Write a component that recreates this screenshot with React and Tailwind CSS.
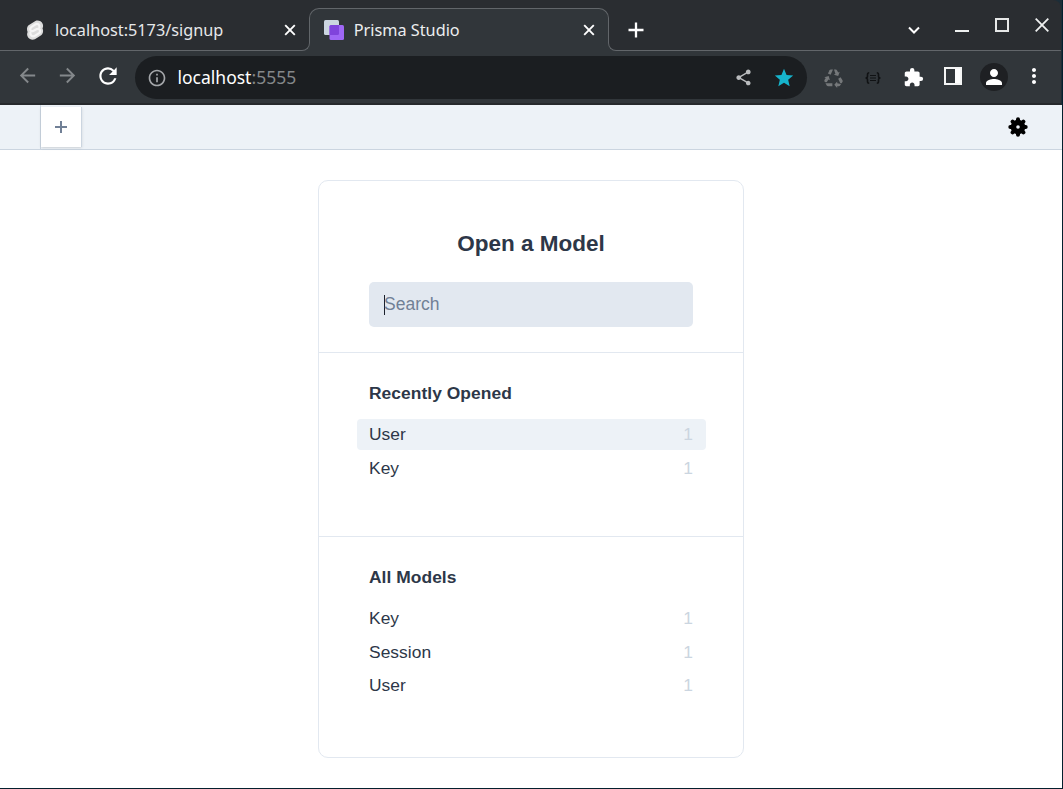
import React from "react";
import { MdArrowBack, MdArrowForward, MdRefresh, MdShare, MdStar, MdExtension, MdPerson, MdMoreVert, MdInfoOutline } from "react-icons/md";

function Close({ className }) {
  return (
    <svg className={className} viewBox="0 0 12 12" width="12" height="12" fill="none" stroke="#fff" strokeWidth="1.900">
      <path d="M1.200 1.200l9.600 9.600M10.800 1.200L1.200 10.800" />
    </svg>
  );
}

function SvelteLogo() {
  return (
    <svg width="18" height="20" viewBox="0 0 18 20" fill="none" strokeLinecap="round">
      <path d="M2.600 5.200 9.400 1C12 -.1 15.400 1 16.600 3.800c.7 1.600.6 3-.1 4.500.8 1.900.9 3.800-.2 5.600-.5.8-1.100 1.400-1.900 1.900l-5.500 3.400C6.200 20.400 2.600 19.200 1.500 16.300c-.6-1.500-.5-3 .1-4.400C.6 9.500.8 6.900 2.600 5.200Z" fill="#dcdcdc" />
      <path d="M13.400 7.200c.6-2.800-2-4-4.200-2.700L5.600 6.800C3 8.600 4.400 12 7.200 11l3.600-1.900c2.800-1 4.500 2 2.300 4l-4.200 2.700c-2.400 1.200-5-.2-4.500-2.900" stroke="#f5f5f5" strokeWidth="2.200" />
    </svg>
  );
}

function PrismaLogo() {
  return (
    <svg width="20" height="20" viewBox="0 0 20 20">
      <rect width="15" height="15" rx="1.500" fill="#cbd5e0" />
      <rect x="5.500" y="5" width="14.500" height="15" rx="1.500" fill="#9f67f5" />
      <path d="M5.500 6.500Q5.500 5 7 5h8v8.500q0 1.500-1.500 1.500h-8z" fill="#8043dc" />
    </svg>
  );
}

function Recycle() {
  return (
    <svg className="mt-[18px] ml-[17px] shrink-0" width="19" height="19" viewBox="0 0 19 19" fill="#75787a">
      <path d="M6.800 .6h2.200L6.600 5.800 3.900 4.500 5.600 1.300Q6 .6 6.800 .6Z" />
      <path d="M10 .6h1.800q.8 0 1.300.8l1.100 2 1.500-.7-1.500 4.300-4.300-1.300 1.500-.9Z" />
      <path d="M14.200 9.700l2.400-1.500 1.900 3q.5 1-.1 1.900l-.7 1.100h-1.400Z" />
      <path d="M17 15l-.7 1.300q-.5.900-1.500.9h-1.600V19l-2.900-3.300 2.900-3.300V14.200Z" />
      <path d="M8.400 14.300v2.900H4.200q-1 0-1.500-.8L1.500 14.300Z" />
      <path d="M.3 8.200l4.400-1.200 1.200 4.200-1.500-.8L2.900 13Q1.200 13.700.5 12.600q-.4-.9.1-1.800l1.200-1.900Z" />
    </svg>
  );
}

function TabStrip() {
  return (
    <div className="flex h-[51px] rounded-tr-[8px] bg-[#2a2d31]">
      <div className="flex w-[301px] items-start border-b border-[#62666a] pt-5 pl-[26px]">
        <SvelteLogo />
        <span className="ml-[11px] w-[229px] text-[16.250px] leading-5 text-[#e6e8ea]">localhost:5173/signup</span>
        <Close className="mt-1" />
      </div>
      <div className="h-[9px] w-[9px] self-end bg-[#31363a]">
        <div className="h-[9px] w-[9px] rounded-br-[8px] border-r border-b border-[#62666a] bg-[#2a2d31]" />
      </div>
      <div className="-ml-px flex w-[300px] flex-col pt-2">
        <div className="flex h-[34px] items-start rounded-t-[10px] border border-b-0 border-[#62666a] bg-[#31363a] pt-[11px] pl-[14px]">
          <PrismaLogo />
          <span className="ml-[9.750px] w-[228.750px] text-[16.250px] leading-5 text-[#eceeef]">Prisma Studio</span>
          <Close className="mt-1" />
        </div>
        <div className="mx-px h-[9px] bg-[#31363a]" />
      </div>
      <div className="-ml-px h-[9px] w-[9px] self-end bg-[#31363a]">
        <div className="h-[9px] w-[9px] rounded-bl-[8px] border-b border-l border-[#62666a] bg-[#2a2d31]" />
      </div>
      <div className="flex grow items-start border-b border-[#62666a]">
        <svg className="mt-[22px] ml-[11px]" width="16" height="16" viewBox="0 0 16 16" stroke="#fff" strokeWidth="2.300">
          <path d="M8 .5v15M.5 8h15" />
        </svg>
        <svg className="mt-[26px] ml-[263px]" width="14" height="9" viewBox="0 0 14 9" fill="none" stroke="#fff" strokeWidth="2">
          <path d="M2 1.500l5 5 5-5" />
        </svg>
        <div className="mt-[30px] ml-[34px] h-[2px] w-[14px] bg-[#eef0f0]" />
        <div className="mt-[18px] ml-[26px] h-[14px] w-[14px] border-2 border-[#e6e8e8]" />
        <svg className="mt-[18px] ml-[26px]" width="14" height="14" viewBox="0 0 14 14" stroke="#eef0f0" strokeWidth="1.800">
          <path d="M.7.7l12.600 12.600M13.300.7L.7 13.300" />
        </svg>
      </div>
    </div>
  );
}

function Toolbar() {
  return (
    <div className="flex h-[54px] items-start border-b-2 border-[#26292c] bg-[#31363a]">
      <MdArrowBack className="mt-[13px] ml-[16px] size-[23px] shrink-0 text-[#84888b]" />
      <MdArrowForward className="mt-[13px] ml-[17px] size-[23px] shrink-0 text-[#84888b]" />
      <MdRefresh className="mt-[12px] ml-[16px] size-[26px] shrink-0 text-white" />
      <div className="mt-[5px] ml-[14px] flex h-[43px] w-[672px] shrink-0 items-center rounded-full bg-[#1b1e21] pl-[12px]">
        <MdInfoOutline className="size-5 text-[#a4a7aa]" />
        <span className="-mt-[2px] ml-[10.500px] w-[556.500px] text-[17.500px] leading-6 text-white">
          localhost<span className="text-[#85888a]">:5555</span>
        </span>
        <MdShare className="size-[19px] text-[#b9bbbd]" />
        <MdStar className="ml-[20px] size-[22px] text-[#16b4cc]" />
      </div>
      <Recycle />
      <svg className="mt-[20px] ml-[22px] shrink-0" width="16" height="14" viewBox="0 0 16 14" fill="none" stroke="#101214">
        <path d="M4.200 1.800Q2.500 1.800 2.500 3.500v1.800Q2.500 7 .5 7q2 0 2 1.700v1.800Q2.500 12.200 4.200 12.200M11.800 1.800q1.700 0 1.700 1.700v1.800Q13.500 7 15.500 7q-2 0-2 1.700v1.800Q13.500 12.200 11.800 12.200" strokeWidth="1.600" />
        <path d="M5 4.500h6M5 7h6M5 9.500h6" strokeWidth="1" />
      </svg>
      <MdExtension className="mt-[16px] ml-[22px] size-[21px] shrink-0 text-white" />
      <div className="mt-[16px] ml-[20px] flex h-[18px] w-[18px] shrink-0 justify-end border-2 border-[#f4f5f5] bg-[#31363a]">
        <div className="h-full w-[5px] bg-white" />
      </div>
      <div className="mt-3 ml-[18px] flex size-7 shrink-0 items-center justify-center rounded-full bg-[#1e2023]">
        <MdPerson className="size-[24px] text-white" />
      </div>
      <MdMoreVert className="mt-[13px] ml-[14px] size-6 shrink-0 text-white" />
    </div>
  );
}

function Gear() {
  return (
    <svg width="20" height="20" viewBox="0 0 20 20">
      <g stroke="#000" strokeWidth="4" strokeLinecap="round">
        <path d="M10 2.300v15.400M2.300 10h15.400M4.600 4.600l10.800 10.800M15.400 4.600L4.600 15.400" />
      </g>
      <circle cx="10" cy="10" r="7.300" />
      <circle cx="10" cy="10" r="1.800" fill="#edf2f7" />
    </svg>
  );
}

function Row({ name, active }) {
  return (
    <div className={"flex h-[31px] items-center justify-between rounded pr-[13px] pl-3 text-[17.400px] leading-[31px] tracking-[0.050px] text-[#2d3748] " + (active ? "bg-[#edf2f7]" : "")}>
      <span>{name}</span>
      <span className="text-[#cbd5e0]">1</span>
    </div>
  );
}

export default function App() {
  return (
    <div className="flex h-[789px] w-[1063px] overflow-hidden border-r border-b border-[#04202e] bg-white font-['Liberation_Sans',sans-serif]">
      <div className="flex w-[1062px] flex-col">
        <header className="bg-[#1d2d38] pr-px font-['Noto_Sans',sans-serif]">
          <TabStrip />
          <Toolbar />
        </header>
        <div className="flex h-[45px] shrink-0 items-start border-b border-[#cbd5e0] bg-[#edf2f7] pl-10">
          <div className="flex h-full border-l border-[#cbd5e0] pt-[2px]">
            <div className="flex h-10 w-[41px] items-center justify-center border-r border-[#cbd5e0] bg-white shadow-sm">
              <svg className="-mt-px" width="12" height="12" viewBox="0 0 12 12" stroke="#718096" strokeWidth="2">
                <path d="M6 0v12M0 6h12" />
              </svg>
            </div>
          </div>
          <div className="mt-3 mr-[34px] ml-auto">
            <Gear />
          </div>
        </div>
        <main className="mt-[30px] ml-[318px] h-[578px] w-[426px] shrink-0 rounded-[10px] border border-[#e2e8f0]">
          <section className="h-[172px] border-b border-[#e2e8f0] px-[50px] pt-[49px]">
            <h1 className="text-center text-[22.500px] leading-[28px] font-bold text-[#2d3748]">Open a Model</h1>
            <div className="mt-[24px] flex h-[45px] items-center rounded-[5px] bg-[#e2e8f0] pl-[15px]">
              <div className="h-5 w-px bg-[#1a202c]" />
              <span className="-mt-[2px] -ml-px text-[17.500px] leading-5 text-[#718096]">Search</span>
            </div>
          </section>
          <section className="h-[184px] border-b border-[#e2e8f0] px-[38px] pt-[30px]">
            <h2 className="mb-[16px] pl-3 text-[17.400px] leading-5 font-bold tracking-[0.050px] text-[#2d3748]">Recently Opened</h2>
            <div className="flex w-[349px] flex-col gap-[2.500px]">
              <Row name="User" active />
              <Row name="Key" />
            </div>
          </section>
          <section className="px-[38px] pt-[30px]">
            <h2 className="mb-[16px] pl-3 text-[17.400px] leading-5 font-bold tracking-[0.050px] text-[#2d3748]">All Models</h2>
            <div className="flex w-[349px] flex-col gap-[2.500px]">
              <Row name="Key" />
              <Row name="Session" />
              <Row name="User" />
            </div>
          </section>
        </main>
      </div>
    </div>
  );
}
